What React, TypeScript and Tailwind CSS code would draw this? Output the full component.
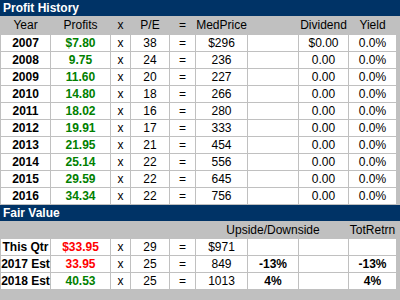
import React from 'react'

const cols = 'grid grid-cols-[49px_59px_19px_38px_25px_51px_50px_49px_47px] gap-x-px pl-px'

const history = [
  ['2007', '$7.80', '38', '$296', '$0.00', '0.0%'],
  ['2008', '9.75', '24', '236', '0.00', '0.0%'],
  ['2009', '11.60', '20', '227', '0.00', '0.0%'],
  ['2010', '14.80', '18', '266', '0.00', '0.0%'],
  ['2011', '18.02', '16', '280', '0.00', '0.0%'],
  ['2012', '19.91', '17', '333', '0.00', '0.0%'],
  ['2013', '21.95', '21', '454', '0.00', '0.0%'],
  ['2014', '25.14', '22', '556', '0.00', '0.0%'],
  ['2015', '29.59', '22', '645', '0.00', '0.0%'],
  ['2016', '34.34', '22', '756', '0.00', '0.0%'],
]

const fair = [
  { label: 'This Qtr', profit: '$33.95', red: true, pe: '29', price: '$971', up: '', tot: '' },
  { label: '2017 Est', profit: '33.95', red: true, pe: '25', price: '849', up: '-13%', tot: '-13%' },
  { label: '2018 Est', profit: '40.53', red: false, pe: '25', price: '1013', up: '4%', tot: '4%' },
]

function Cell({ children, className = '' }: { children?: React.ReactNode; className?: string }) {
  return (
    <div className={`flex justify-center items-center whitespace-nowrap h-[16px] leading-[16px] ${className}`}>
      {children}
    </div>
  )
}

export default function App() {
  return (
    <div className="w-[400px] h-[300px] overflow-hidden bg-[#c0c0c0] text-[12px] text-black font-['Liberation_Sans',Arial,sans-serif]">
      <div className="h-[16px] leading-[16px] bg-[#003366] text-white font-bold pl-[3px]">Profit History</div>

      <div className={`${cols} h-[18px] items-center`}>
        <Cell>Year</Cell>
        <Cell>Profits</Cell>
        <Cell>x</Cell>
        <Cell>P/E</Cell>
        <Cell>=</Cell>
        <Cell>MedPrice</Cell>
        <Cell />
        <Cell>Dividend</Cell>
        <Cell>Yield</Cell>
      </div>

      <div className="flex flex-col gap-y-px pt-px">
        {history.map(([year, profit, pe, price, div, yld]) => (
          <div key={year} className={cols}>
            <Cell className="bg-white font-bold">{year}</Cell>
            <Cell className="bg-white font-bold text-[#008000]">{profit}</Cell>
            <Cell className="bg-white">x</Cell>
            <Cell className="bg-white">{pe}</Cell>
            <Cell className="bg-white">=</Cell>
            <Cell className="bg-white">{price}</Cell>
            <Cell className="bg-white" />
            <Cell className="bg-white">{div}</Cell>
            <Cell className="bg-white">{yld}</Cell>
          </div>
        ))}
      </div>

      <div className="mt-px h-[16px] leading-[16px] bg-[#003366] text-white font-bold pl-[3px]">Fair Value</div>

      <div className={`${cols} h-[17px] items-center`}>
        <Cell />
        <Cell />
        <Cell />
        <Cell />
        <Cell />
        <Cell />
        <Cell>Upside/Downside</Cell>
        <Cell />
        <Cell>TotRetrn</Cell>
      </div>

      <div className="flex flex-col gap-y-px pt-px">
        {fair.map((r) => (
          <div key={r.label} className={cols}>
            <Cell className="bg-white font-bold">{r.label}</Cell>
            <Cell className={`bg-white font-bold ${r.red ? 'text-[#ff0000]' : 'text-[#008000]'}`}>{r.profit}</Cell>
            <Cell className="bg-white">x</Cell>
            <Cell className="bg-white">{r.pe}</Cell>
            <Cell className="bg-white">=</Cell>
            <Cell className="bg-white">{r.price}</Cell>
            <Cell className="bg-white font-bold">{r.up}</Cell>
            <Cell className="bg-white" />
            <Cell className="bg-white font-bold">{r.tot}</Cell>
          </div>
        ))}
      </div>
    </div>
  )
}
